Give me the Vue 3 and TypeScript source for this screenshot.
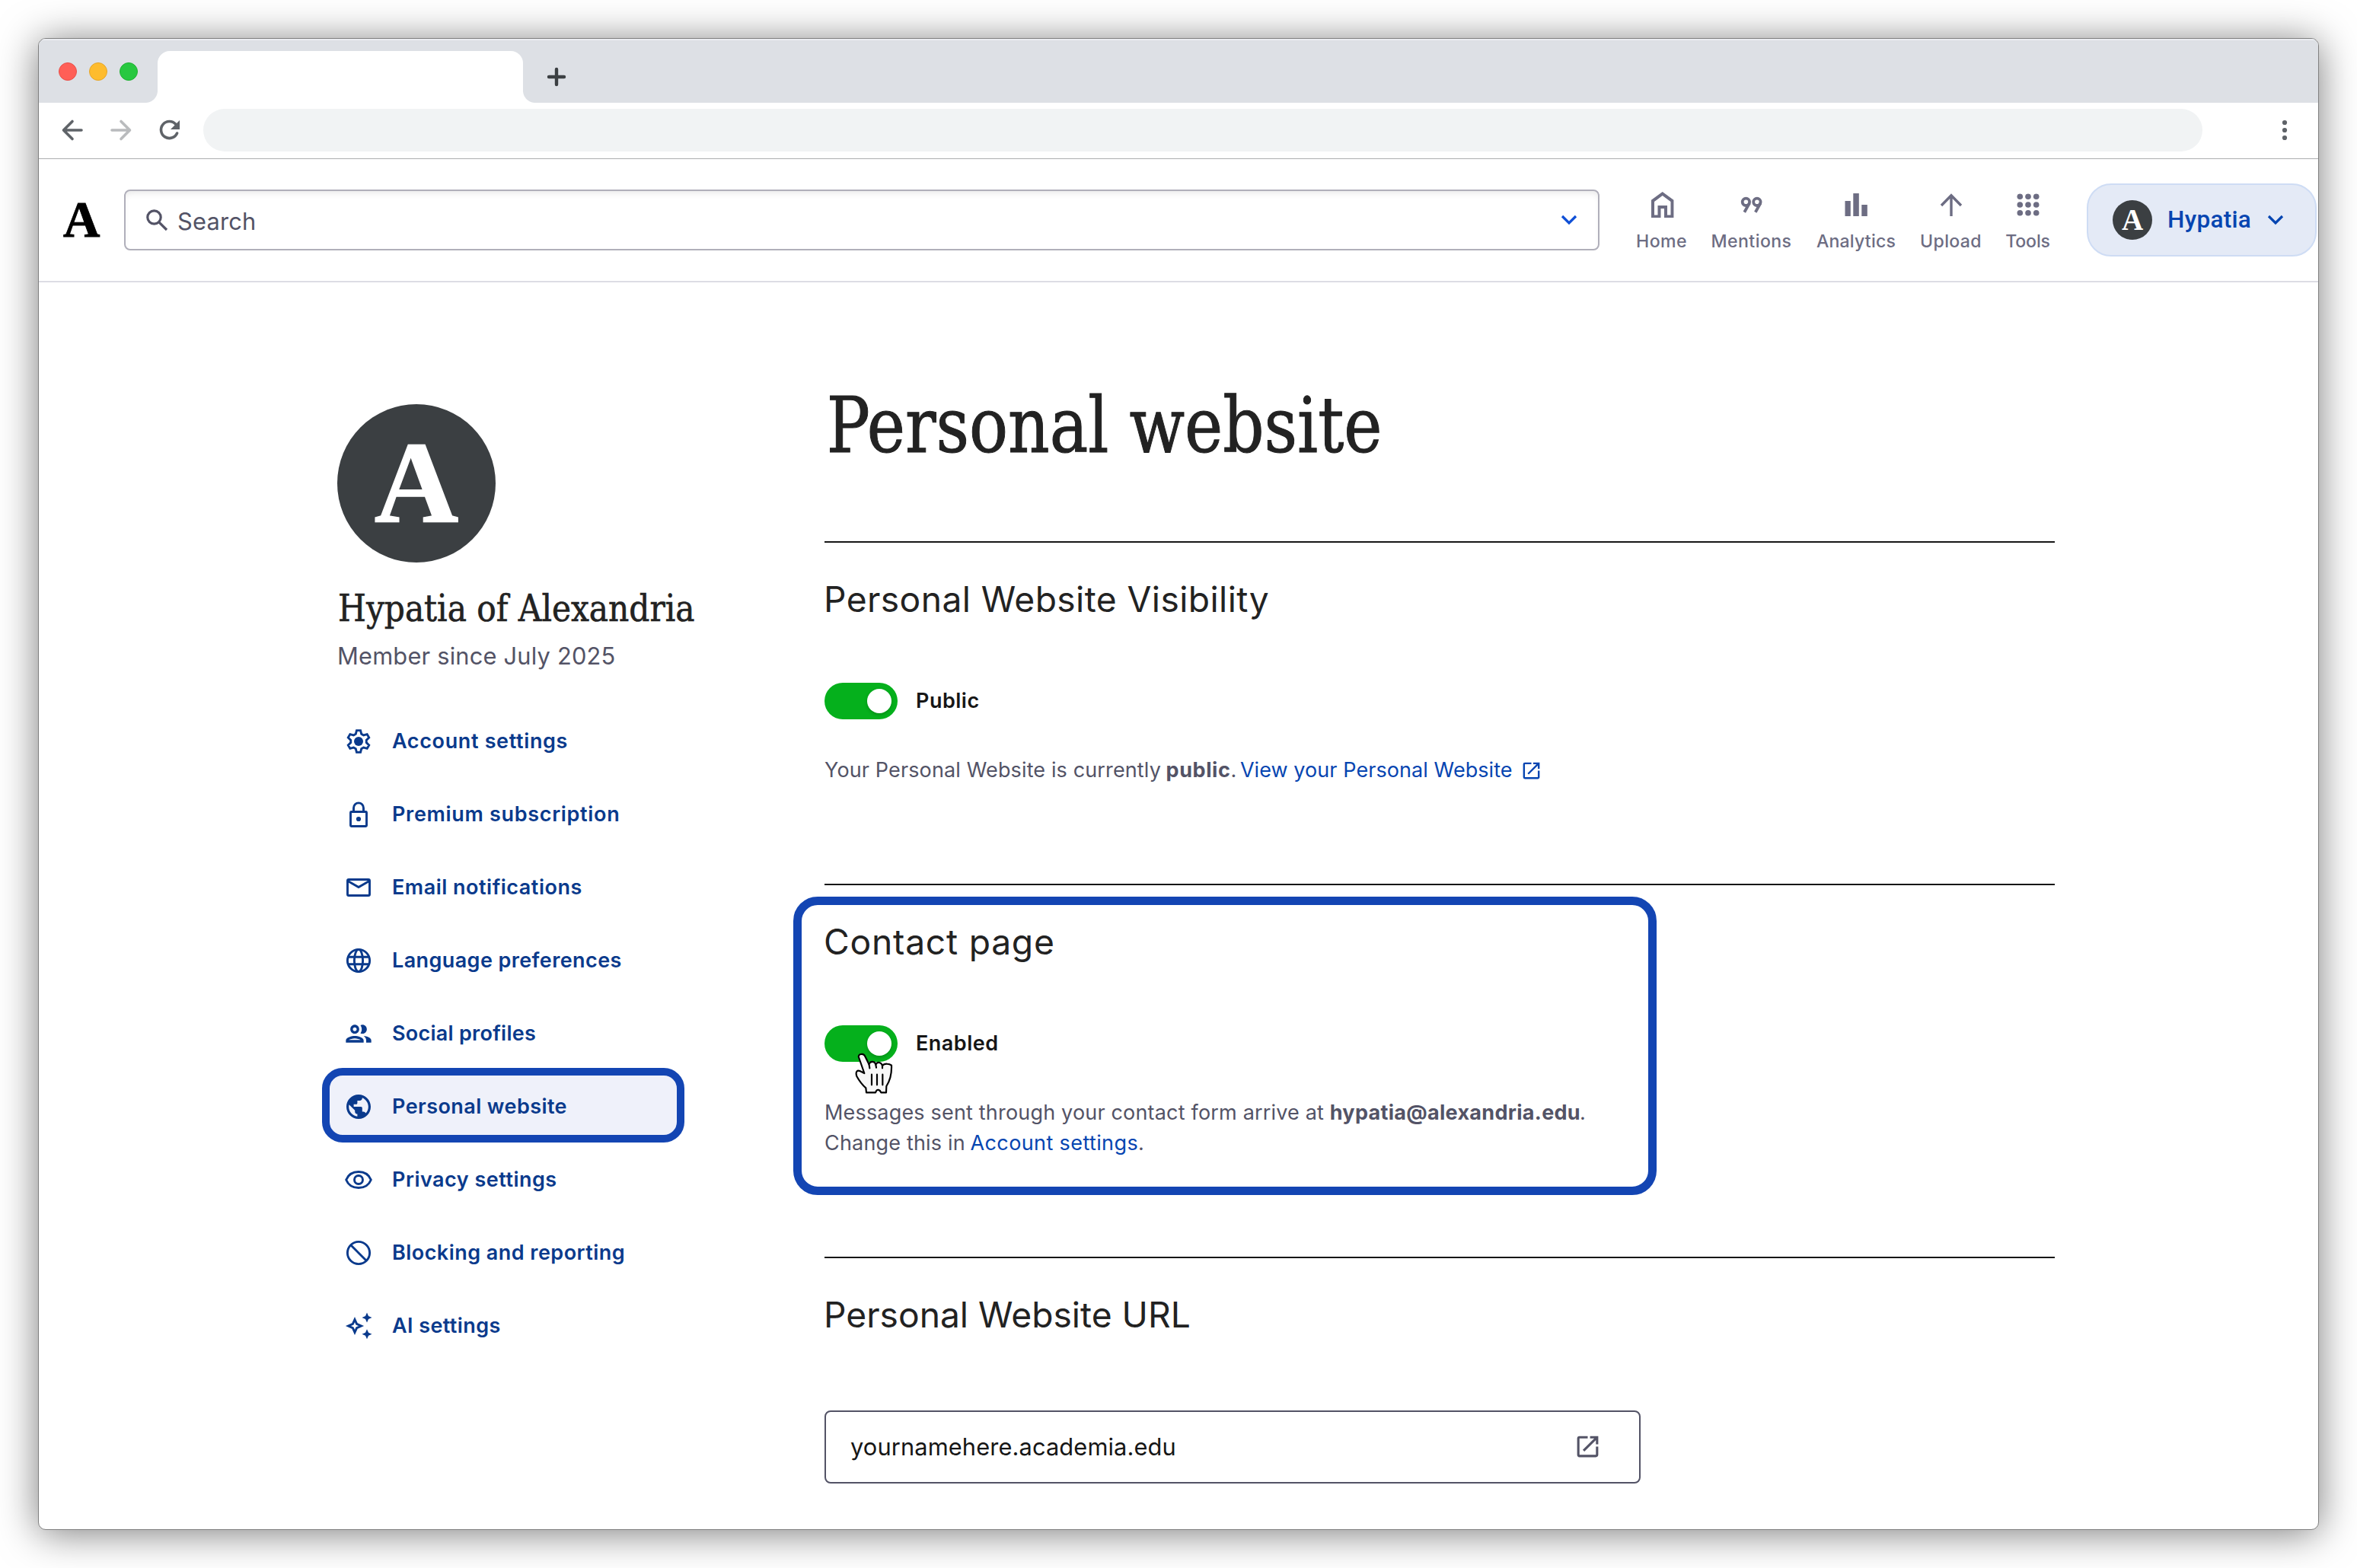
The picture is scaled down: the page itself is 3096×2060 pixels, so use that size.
<script setup lang="ts">
interface NavItem { label: string; icon: string; ls: number; active?: boolean }
interface TopItem { label: string; icon: string; width: number; ls: number }

const topItems: TopItem[] = [
  { label: 'Home', icon: 'home', width: 65, ls: 0.45 },
  { label: 'Mentions', icon: 'mentions', width: 104, ls: 0.42 },
  { label: 'Analytics', icon: 'analytics', width: 104, ls: 0.19 },
  { label: 'Upload', icon: 'upload', width: 78, ls: 0.36 },
  { label: 'Tools', icon: 'tools', width: 57, ls: -0.17 },
]

const navItems: NavItem[] = [
  { label: 'Account settings', icon: 'gear', ls: 0.64 },
  { label: 'Premium subscription', icon: 'lock', ls: 0.68 },
  { label: 'Email notifications', icon: 'mail', ls: 0.5 },
  { label: 'Language preferences', icon: 'globe', ls: 0.4 },
  { label: 'Social profiles', icon: 'people', ls: 0.26 },
  { label: 'Personal website', icon: 'earth', ls: 0.42, active: true },
  { label: 'Privacy settings', icon: 'eye', ls: 0.49 },
  { label: 'Blocking and reporting', icon: 'block', ls: 0.46 },
  { label: 'AI settings', icon: 'sparkle', ls: 0.41 },
]

// Six-toothed gear outline centred in a 40x40 box
const polar = (r: number, deg: number): string => {
  const a = ((deg - 90) * Math.PI) / 180
  return `${(20 + r * Math.cos(a)).toFixed(2)},${(20 + r * Math.sin(a)).toFixed(2)}`
}
const gearPoints = [0, 60, 120, 180, 240, 300]
  .flatMap((d) => [polar(10.4, d - 21), polar(14.6, d - 10), polar(14.6, d + 10), polar(10.4, d + 21)])
  .join(' ')

const toolDots = [0, 1, 2].flatMap((r) => [0, 1, 2].map((c) => ({ x: 13.3 + c * 10.7, y: 13.3 + r * 10.7 })))
const openInNew =
  'M19 19H5V5h7V3H5a2 2 0 0 0-2 2v14a2 2 0 0 0 2 2h14c1.1 0 2-.9 2-2v-7h-2v7zM14 3v2h3.59l-9.83 9.83 1.41 1.41L19 6.41V10h2V3h-7z'
</script>

<template>
  <div class="page">
    <div class="window">
      <div class="tabs">
        <div class="lights"><i class="red"></i><i class="yellow"></i><i class="green"></i></div>
        <div class="tab"></div>
        <svg class="plus" width="26" height="26" viewBox="0 0 26 26"><path d="M13 3v20M3 13h20" /></svg>
      </div>
      <div class="toolbar">
        <svg width="30" height="30" viewBox="0 0 30 30" class="tb"><path d="M27 15H4M15 3.500L3.500 15 15 26.500" /></svg>
        <svg width="30" height="30" viewBox="0 0 30 30" class="tb dim"><path d="M3 15h23M15 3.500L26.500 15 15 26.500" /></svg>
        <svg width="30" height="30" viewBox="0 0 30 30" class="tb">
          <path d="M24.600 19A11 11 0 1 1 22.800 7.300" /><path class="solid" d="M28 2v12H16z" />
        </svg>
        <div class="address"></div>
        <svg class="kebab" width="8" height="28" viewBox="0 0 8 28"><circle cx="4" cy="4" r="3.100" /><circle cx="4" cy="14" r="3.100" /><circle cx="4" cy="24" r="3.100" /></svg>
      </div>

      <header class="header">
        <div class="logo">A</div>
        <div class="search">
          <svg width="30" height="30" viewBox="0 0 30 30" class="lens"><circle cx="11.500" cy="11.500" r="8.700" /><path d="M17.800 17.800L28 28" /></svg>
          <span class="placeholder">Search</span>
          <svg class="chev bright" width="22" height="14" viewBox="0 0 22 14"><path d="M2 2l9 9 9-9" /></svg>
        </div>
        <nav class="top">
          <a v-for="t in topItems" :key="t.label" class="topitem" :style="{ width: t.width + 'px', letterSpacing: t.ls + 'px' }">
            <svg width="48" height="48" viewBox="0 0 48 48">
              <path v-if="t.icon === 'home'" d="M14 37.500h4.500V25H31v12.500h4.500V20L24.700 12 14 20zM10 41V17.800L24.700 7l14.700 10.800V41H27V29h-4.500v12z" />
              <g v-else-if="t.icon === 'mentions'" class="quotes">
                <circle cx="16.400" cy="20.300" r="4.700" /><path d="M20.900 22L14.300 33.800" />
                <circle cx="30.900" cy="20.300" r="4.700" /><path d="M35.400 22L28.800 33.800" />
              </g>
              <path v-else-if="t.icon === 'analytics'" d="M9.500 19h7.300v20H9.500zM20.300 9h7.500v30h-7.500zM31.300 24h7.500v15h-7.500z" />
              <path v-else-if="t.icon === 'upload'" class="line" d="M24 39V12M11 25l13-13.300L37 25" />
              <template v-else><circle v-for="(d, i) in toolDots" :key="i" :cx="d.x" :cy="d.y" r="3.800" /></template>
            </svg>
            <span>{{ t.label }}</span>
          </a>
        </nav>
        <div class="account">
          <span class="mini">A</span>
          <span class="user">Hypatia</span>
          <svg class="chev" width="22" height="14" viewBox="0 0 22 14"><path d="M2 2l9 9 9-9" /></svg>
        </div>
      </header>

      <div class="body">
        <aside class="side">
          <div class="avatar">A</div>
          <div class="name">Hypatia of Alexandria</div>
          <div class="since">Member since July 2025</div>
          <ul class="menu">
            <li v-for="n in navItems" :key="n.label" :class="{ active: n.active }">
              <svg width="40" height="40" viewBox="0 0 40 40">
                <g v-if="n.icon === 'gear'"><polygon class="o" :points="gearPoints" /><circle cx="20" cy="20" r="6" /></g>
                <g v-else-if="n.icon === 'lock'">
                  <rect class="o" x="9.500" y="16.500" width="21" height="19" rx="1" /><path class="o" d="M13.500 16v-4.600a6.500 6.500 0 0 1 13 0V16" /><circle cx="20" cy="26" r="3.100" />
                </g>
                <g v-else-if="n.icon === 'mail'"><rect class="o" x="5.500" y="9.500" width="29" height="21" rx="1.500" /><path class="o" d="M6 11.500l14 8 14-8" /></g>
                <g v-else-if="n.icon === 'globe'">
                  <circle class="o" cx="20" cy="20" r="14.600" /><ellipse class="o" cx="20" cy="20" rx="5.600" ry="14.600" /><path class="o" d="M6.500 15.200h27M6.500 24.800h27" />
                </g>
                <path v-else-if="n.icon === 'people'" transform="scale(1.6667)" d="M9 13.750c-2.340 0-7 1.170-7 3.500V19h14v-1.750c0-2.330-4.660-3.500-7-3.500zM4.340 17c.84-.58 2.870-1.250 4.660-1.250s3.820.67 4.660 1.250H4.340zM9 12c1.930 0 3.500-1.570 3.500-3.500S10.930 5 9 5 5.500 6.570 5.500 8.500 7.070 12 9 12zm0-5c.83 0 1.500.67 1.500 1.500S9.830 10 9 10s-1.500-.67-1.500-1.500S8.170 7 9 7zm7.040 6.810c1.160.84 1.960 1.960 1.960 3.440V19h4v-1.750c0-2.020-3.500-3.170-5.960-3.440zM15 12c1.930 0 3.500-1.570 3.500-3.500S16.930 5 15 5c-.54 0-1.040.13-1.500.35.63.89 1 1.980 1 3.150s-.37 2.260-1 3.150c.46.22.96.35 1.500.35z" />
                <path v-else-if="n.icon === 'earth'" transform="translate(.8 .8) scale(1.6)" d="M12 2C6.480 2 2 6.480 2 12s4.480 10 10 10 10-4.480 10-10S17.520 2 12 2zm-1 17.930c-3.950-.49-7-3.850-7-7.930 0-.62.08-1.210.21-1.790L9 15v1c0 1.100.9 2 2 2v1.930zm6.900-2.540c-.26-.81-1-1.390-1.900-1.390h-1v-3c0-.55-.45-1-1-1H8v-2h2c.55 0 1-.45 1-1V7h2c1.100 0 2-.9 2-2v-.41c2.930 1.190 5 4.060 5 7.410 0 2.080-.8 3.970-2.100 5.390z" />
                <g v-else-if="n.icon === 'eye'">
                  <path class="o" d="M3.700 20C6.500 13 12.800 9.500 20 9.500S33.500 13 36.300 20C33.500 27 27.200 30.500 20 30.500S6.500 27 3.700 20z" /><circle class="o" cx="20" cy="20" r="5.500" />
                </g>
                <g v-else-if="n.icon === 'block'"><circle class="o" cx="20" cy="20" r="14.600" /><path class="o" d="M9.800 9.800l20.400 20.400" /></g>
                <g v-else>
                  <path class="o" d="M15 11.500l2.600 5.900 5.900 2.600-5.900 2.600L15 28.500l-2.600-5.900L6.500 20l5.900-2.600z" />
                  <path d="M31 2.500l2 4.500 4.500 2-4.500 2-2 4.500-2-4.500-4.500-2 4.500-2zM31 24.200l2 4.500 4.500 2-4.500 2-2 4.500-2-4.500-4.500-2 4.500-2z" />
                </g>
              </svg>
              <span :style="{ letterSpacing: n.ls + 'px' }">{{ n.label }}</span>
            </li>
          </ul>
        </aside>

        <main class="main">
          <h1>Personal website</h1>
          <section class="s1">
            <h2 class="t1">Personal Website Visibility</h2>
            <div class="row"><span class="toggle"><i></i></span><b>Public</b></div>
            <p>
              <span class="a">Your Personal Website is currently</span> <strong class="b">public</strong>. <a class="c">View your Personal Website</a>
              <svg class="ext" width="29" height="29" viewBox="0 0 24 24"><path :d="openInNew" /></svg>
            </p>
          </section>
          <section class="s2">
            <div class="ring"></div>
            <h2 class="t2">Contact page</h2>
            <div class="row">
              <span class="toggle"><i></i></span><b>Enabled</b>
              <svg class="cursor" width="50" height="54" viewBox="189 190 150 162">
                <path d="M204 208c-4-13 18-17 24-5l16 32c6-14 24-12 27 2 6-13 22-10 26 4 8-10 28-8 36-1 1 24-3 56-20 82l-1 25h-20c-4-10-16-18-22 0h-36l-2-18c-14-12-26-28-36-46-6-18 2-26 14-20l16 8z" />
                <path d="M244 233l3 18M271 237l2 12M297 241v10M255 276v41M276 276v41M298 276v41" />
              </svg>
            </div>
            <p>
              <span class="d">Messages sent through your contact form arrive at</span> <strong class="e">hypatia@alexandria.edu</strong>.<br />
              <span class="d">Change this in</span> <a class="f">Account settings</a>.
            </p>
          </section>
          <section class="s3">
            <h2>Personal Website URL</h2>
            <div class="url">
              <span>yournamehere.academia.edu</span>
              <svg width="37" height="37" viewBox="0 0 24 24"><path :d="openInNew" /></svg>
            </div>
          </section>
        </main>
      </div>
    </div>
  </div>
</template>

<style>
html, body { background: #fff; overflow: hidden; }
</style>

<style scoped>
*, *::before, *::after { box-sizing: border-box; }
.page { width: 3096px; height: 2060px; padding: 50px; background: #fff; font-family: Inter, "Liberation Sans", sans-serif; overflow: hidden; }
.window { width: 2996px; height: 1960px; border: 1px solid #808080; border-radius: 10px; overflow: hidden; background: #fff; box-shadow: 0 4px 52px rgba(0, 0, 0, 0.52); }

.tabs { height: 84px; background: #dde0e5; display: flex; box-shadow: inset 0 2px 0 #ebedf2; }
.lights { display: flex; gap: 16px; padding: 31px 0 0 26px; width: 156px; flex: none; }
.lights i { width: 24px; height: 24px; border-radius: 50%; }
.red { background: #ff5f57; border: 1px solid #e8504a; }
.yellow { background: #febc2e; border: 1px solid #e5a62a; }
.green { background: #28c840; border: 1px solid #20b132; }
.tab { position: relative; width: 480px; height: 68px; margin-top: 16px; background: #fff; border-radius: 16px 16px 0 0; }
.tab::before, .tab::after { content: ''; position: absolute; bottom: 0; width: 16px; height: 16px; }
.tab::before { left: -16px; background: radial-gradient(circle at 0 0, transparent 15.500px, #fff 16.500px); }
.tab::after { right: -16px; background: radial-gradient(circle at 100% 0, transparent 15.500px, #fff 16.500px); }
.plus { margin: 37px 0 0 31px; stroke: #3c4043; stroke-width: 4.400; stroke-linecap: round; fill: none; }

.toolbar { height: 74px; border-bottom: 1px solid #adaeb0; display: flex; align-items: center; padding: 0 0 2px 29px; }
.tb { fill: none; stroke: #5f6368; stroke-width: 3.600; margin-right: 34px; stroke-linecap: round; stroke-linejoin: round; flex: none; }
.tb.dim { stroke: #b9bbbd; }
.tb .solid { fill: #5f6368; stroke: none; }
.address { width: 2626px; height: 56px; border-radius: 28px; background: #f1f3f4; margin-left: -5px; flex: none; }
.kebab { margin-left: 104px; fill: #5f6368; }

.header { height: 162px; border-bottom: 2px solid #dddde4; display: flex; align-items: center; padding-left: 32px; }
.logo { width: 80px; flex: none; font: bold 67px/70px "Liberation Serif", serif; color: #000; padding-bottom: 2px; -webkit-text-stroke: 1px #000; }
.search { width: 1938px; height: 80px; flex: none; border: 2px solid #b0afba; border-radius: 8px; box-shadow: inset 0 6px 10px -4px rgba(0, 0, 0, 0.1); display: flex; align-items: center; padding: 0 27px 0 26px; }
.lens { fill: none; stroke: #535366; stroke-width: 3.200; }
.placeholder { font-size: 30.800px; letter-spacing: 0.200px; color: #535366; margin: 2px 0 0 12px; flex: 1; }
.chev { fill: none; stroke: #0645b1; stroke-width: 3.200; }
.bright { stroke: #0f4fd6; }
.top { display: flex; gap: 33.500px; margin-left: 49px; }
.topitem { display: flex; flex-direction: column; align-items: center; gap: 8px; color: #6d6d83; font-size: 23.100px; font-weight: 500; line-height: 32px; white-space: nowrap; }
.topitem svg { fill: #6d6d83; flex: none; }
.topitem .line { fill: none; stroke: #6d6d83; stroke-width: 3.400; }
.topitem .quotes { fill: none; stroke: #6d6d83; stroke-width: 3.800; }
.account { margin-left: auto; margin-right: 2px; width: 302px; height: 96px; flex: none; border: 2px solid #cedcf4; border-radius: 32px; background: #e4eaf6; display: flex; align-items: center; padding-left: 32px; }
.mini { width: 52px; height: 52px; border-radius: 50%; background: #3b3f42; color: #fff; font: bold 39px/51px "Liberation Serif", serif; text-align: center; }
.user { font: 500 31.500px/40px Roboto, sans-serif; letter-spacing: 0.300px; color: #0645b1; margin: 0 0 0 20px; width: 111px; }
.account .chev { margin-left: 20px; }

.body { display: flex; padding-left: 392px; }
.side { width: 640px; padding-top: 160px; }
.avatar { width: 208px; height: 208px; border-radius: 50%; background: #3b3f42; color: #fff; font: bold 153px/205px "Liberation Serif", serif; text-align: center; -webkit-text-stroke: 1.500px #fff; }
.name { margin-top: 30px; font: 48px/60px "DejaVu Serif Condensed", "DejaVu Serif", serif; font-stretch: condensed; color: #222; white-space: nowrap; transform: scaleX(0.98); transform-origin: 0 0; padding-left: 1px; -webkit-text-stroke: 0.600px #222; }
.since { margin-top: 13px; font-size: 30.800px; line-height: 40px; letter-spacing: 0.200px; color: #535366; }
.menu { list-style: none; margin: 44px 0 0 -20px; padding: 0; width: 476px; }
.menu li { position: relative; height: 96px; display: flex; align-items: center; gap: 24px; padding-left: 28px; color: #0a3a8c; font-size: 27px; font-weight: 600; white-space: nowrap; }
.menu li > * { position: relative; }
.menu span { margin-top: -1px; }
.menu svg { fill: #0a3a8c; flex: none; }
.menu .o { fill: none; stroke: #0a3a8c; stroke-width: 2.900; }
.menu .active::before { content: ''; position: absolute; left: 0; top: -3px; width: 476px; height: 98px; border: 10px solid #1345b3; border-radius: 27px; background: #eff1fa; }

.main { width: 1616px; padding-top: 128px; color: #535366; }
h1 { margin: 0 0 92px; padding-left: 3px; font: 400 101px/120px "DejaVu Serif Condensed", "DejaVu Serif", serif; font-stretch: condensed; color: #222; white-space: nowrap; transform: scaleX(0.934); transform-origin: 0 0; -webkit-text-stroke: 1px #222; }
section { position: relative; border-top: 2px solid #161616; }
.s1 { height: 450px; }
.s2 { height: 490px; }
h2 { margin: 44px 0 0 -1px; padding-bottom: 1px; font-size: 46.200px; line-height: 60px; font-weight: 400; color: #222; }
.t1 { letter-spacing: 0.410px; }
.t2 { letter-spacing: 0.770px; }
.row { position: relative; display: flex; align-items: center; gap: 24px; margin-top: 79px; height: 48px; }
.row b { font-size: 27px; font-weight: 600; color: #161616; letter-spacing: 0.500px; margin-top: -1px; }
.toggle { width: 96px; height: 48px; border-radius: 24px; background: #05b01c; padding: 8px; display: flex; justify-content: flex-end; }
.toggle i { width: 32px; height: 32px; border-radius: 50%; background: #fff; box-shadow: 0 2px 4px rgba(0, 0, 0, 0.2); }
p { margin: 47px 0 0; font-size: 27px; line-height: 40px; white-space: nowrap; }
p a { color: #0645b1; }
strong { font-weight: 700; }
.a { letter-spacing: 0.130px; }
.b { letter-spacing: 0.600px; margin-left: -1px; }
.c { letter-spacing: 0.070px; margin-left: -3px; }
.d { letter-spacing: 0.180px; }
.e { letter-spacing: 0.300px; margin-right: -1px; }
.f { letter-spacing: 0.390px; margin-left: -1px; }
.ext { fill: #0645b1; vertical-align: -6px; margin-left: 10px; }
.ring { position: absolute; left: -41px; top: 15px; width: 1134px; height: 392px; border: 11px solid #1345b3; border-radius: 32px; }
.cursor { position: absolute; left: 40px; top: 36px; fill: #f7f7f7; stroke: #000; stroke-width: 6.500; stroke-linecap: round; stroke-linejoin: round; }
.url { margin-top: 95px; width: 1072px; height: 96px; border: 2px solid #535366; border-radius: 8px; display: flex; align-items: center; justify-content: space-between; padding: 0 49px 2px 32px; font-size: 30.800px; letter-spacing: 0.120px; color: #161616; }
.url svg { fill: #535366; }
</style>
